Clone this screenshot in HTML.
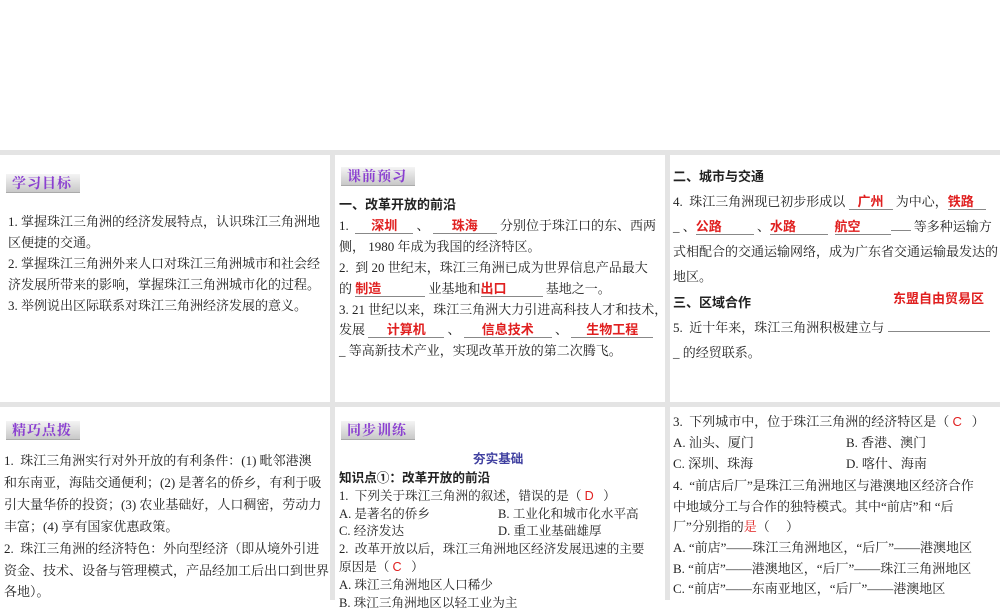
<!DOCTYPE html>
<html><head><meta charset="utf-8"><style>
*{margin:0;padding:0;box-sizing:border-box}
body{width:1000px;height:600px;background:#fff;position:relative;overflow:hidden;font-family:"Liberation Serif","Noto Serif CJK SC",serif;color:#222}
.bg{position:absolute;left:0;top:150px;width:1000px;height:450px;background:#e4e4e4}
.p{position:absolute;background:#fff}
.l{position:absolute;white-space:nowrap;font-size:13px;line-height:16px}
.h{font-family:"Liberation Sans","Noto Sans CJK SC",sans-serif;font-weight:bold}
.lab{position:absolute;width:74px;height:19px;background:linear-gradient(#f4f4f4,#c8c8c8);border-bottom:1px solid #aaa;color:#8a3fd0;font-family:"Noto Serif CJK SC",serif;font-weight:bold;font-size:14px;line-height:19px;padding-left:6px;letter-spacing:1px}
.r{color:#e02020;font-family:"Liberation Sans","Noto Sans CJK SC",sans-serif;font-weight:bold}
.u{display:inline-block;border-bottom:1px solid #888;text-align:center;line-height:14px}
.s{font-size:12.6px}
</style></head><body>
<div class="bg"></div>
<div class="p" style="left:0;top:155px;width:330px;height:247px"></div>
<div class="p" style="left:335px;top:155px;width:330px;height:247px"></div>
<div class="p" style="left:670px;top:155px;width:330px;height:247px"></div>
<div class="p" style="left:0;top:407px;width:330px;height:193px"></div>
<div class="p" style="left:335px;top:407px;width:330px;height:193px"></div>
<div class="p" style="left:670px;top:407px;width:330px;height:193px"></div>

<div class="lab" style="left:6px;top:174px">学习目标</div>
<div class="l" style="left:8px;top:214px">1. 掌握珠江三角洲的经济发展特点，认识珠江三角洲地</div>
<div class="l" style="left:8px;top:235px">区便捷的交通。</div>
<div class="l" style="left:8px;top:256px">2. 掌握珠江三角洲外来人口对珠江三角洲城市和社会经</div>
<div class="l" style="left:8px;top:277px">济发展所带来的影响，掌握珠江三角洲城市化的过程。</div>
<div class="l" style="left:8px;top:298px">3. 举例说出区际联系对珠江三角洲经济发展的意义。</div>

<div class="lab" style="left:341px;top:167px">课前预习</div>
<div class="l h" style="left:339px;top:197px">一、改革开放的前沿</div>
<div class="l" style="left:339px;top:218px">1. &nbsp;<span class="u" style="width:58px"><span class="r">深圳</span></span> 、 <span class="u" style="width:64px"><span class="r">珠海</span></span> 分别位于珠江口的东、西两</div>
<div class="l" style="left:339px;top:239px">侧， 1980 年成为我国的经济特区。</div>
<div class="l" style="left:339px;top:260px">2. &nbsp;到 20 世纪末，珠江三角洲已成为世界信息产品最大</div>
<div class="l" style="left:339px;top:281px">的 <span class="u" style="width:70px;text-align:left"><span class="r">制造</span></span> 业基地和<span class="u" style="width:62px;text-align:left"><span class="r">出口</span></span> 基地之一。</div>
<div class="l" style="left:339px;top:302px">3. 21 世纪以来，珠江三角洲大力引进高科技人才和技术，</div>
<div class="l" style="left:339px;top:322px">发展 <span class="u" style="width:76px"><span class="r">计算机</span></span> 、 <span class="u" style="width:88px"><span class="r">信息技术</span></span> 、 <span class="u" style="width:82px"><span class="r">生物工程</span></span></div>
<div class="l" style="left:339px;top:343px">_ 等高新技术产业，实现改革开放的第二次腾飞。</div>

<div class="l h" style="left:673px;top:169px">二、城市与交通</div>
<div class="l" style="left:673px;top:194px">4. &nbsp;珠江三角洲现已初步形成以 <span class="u" style="width:44px"><span class="r">广州</span></span> 为中心，<span class="u" style="width:38px;text-align:left"><span class="r">铁路</span></span></div>
<div class="l" style="left:673px;top:219px">_ 、<span class="u" style="width:58px;text-align:left"><span class="r">公路</span></span> 、<span class="u" style="width:58px;text-align:left"><span class="r">水路</span></span> &nbsp;<span class="u" style="width:56px;text-align:left"><span class="r">航空</span></span><span class="u" style="width:20px"></span> 等多种运输方</div>
<div class="l" style="left:673px;top:244px">式相配合的交通运输网络，成为广东省交通运输最发达的</div>
<div class="l" style="left:673px;top:269px">地区。</div>
<div class="l h" style="left:673px;top:295px">三、区域合作</div>
<div class="l r" style="left:893px;top:291px">东盟自由贸易区</div>
<div class="l" style="left:673px;top:320px">5. &nbsp;近十年来，珠江三角洲积极建立与 <span class="u" style="width:102px"></span></div>
<div class="l" style="left:673px;top:345px">_ 的经贸联系。</div>

<div class="lab" style="left:6px;top:421px">精巧点拨</div>
<div class="l" style="left:4px;top:453px">1. &nbsp;珠江三角洲实行对外开放的有利条件：(1) 毗邻港澳</div>
<div class="l" style="left:4px;top:475px">和东南亚，海陆交通便利；(2) 是著名的侨乡，有利于吸</div>
<div class="l" style="left:4px;top:497px">引大量华侨的投资；(3) 农业基础好，人口稠密，劳动力</div>
<div class="l" style="left:4px;top:519px">丰富；(4) 享有国家优惠政策。</div>
<div class="l" style="left:4px;top:541px">2. &nbsp;珠江三角洲的经济特色：外向型经济（即从境外引进</div>
<div class="l" style="left:4px;top:563px">资金、技术、设备与管理模式，产品经加工后出口到世界</div>
<div class="l" style="left:4px;top:584px">各地）。</div>

<div class="lab" style="left:341px;top:421px">同步训练</div>
<div class="l h s" style="left:473px;top:451px;color:#4040a0">夯实基础</div>
<div class="l h s" style="left:339px;top:470px">知识点①：改革开放的前沿</div>
<div class="l s" style="left:339px;top:488px">1. &nbsp;下列关于珠江三角洲的叙述，错误的是（ <span class="r" style="font-weight:normal">D</span> &nbsp;&nbsp;）</div>
<div class="l s" style="left:339px;top:506px">A. 是著名的侨乡</div>
<div class="l s" style="left:498px;top:506px">B. 工业化和城市化水平高</div>
<div class="l s" style="left:339px;top:523px">C. 经济发达</div>
<div class="l s" style="left:498px;top:523px">D. 重工业基础雄厚</div>
<div class="l s" style="left:339px;top:541px">2. &nbsp;改革开放以后，珠江三角洲地区经济发展迅速的主要</div>
<div class="l s" style="left:339px;top:559px">原因是（ <span class="r" style="font-weight:normal">C</span> &nbsp;&nbsp;）</div>
<div class="l s" style="left:339px;top:577px">A. 珠江三角洲地区人口稀少</div>
<div class="l s" style="left:339px;top:595px">B. 珠江三角洲地区以轻工业为主</div>

<div class="l" style="left:673px;top:414px">3. &nbsp;下列城市中，位于珠江三角洲的经济特区是（ <span class="r" style="font-weight:normal">C</span> &nbsp;&nbsp;）</div>
<div class="l" style="left:673px;top:435px">A. 汕头、厦门</div>
<div class="l" style="left:846px;top:435px">B. 香港、澳门</div>
<div class="l" style="left:673px;top:456px">C. 深圳、珠海</div>
<div class="l" style="left:846px;top:456px">D. 喀什、海南</div>
<div class="l" style="left:673px;top:478px">4. &nbsp;“前店后厂”是珠江三角洲地区与港澳地区经济合作</div>
<div class="l" style="left:673px;top:499px">中地域分工与合作的独特模式。其中“前店”和 “后</div>
<div class="l" style="left:673px;top:519px">厂”分别指的<span style="color:#e02020">是</span>（ &nbsp;&nbsp;&nbsp;&nbsp;）</div>
<div class="l" style="left:673px;top:540px">A. “前店”——珠江三角洲地区，“后厂”——港澳地区</div>
<div class="l" style="left:673px;top:561px">B. “前店”——港澳地区，“后厂”——珠江三角洲地区</div>
<div class="l" style="left:673px;top:581px">C. “前店”——东南亚地区，“后厂”——港澳地区</div>
</body></html>
